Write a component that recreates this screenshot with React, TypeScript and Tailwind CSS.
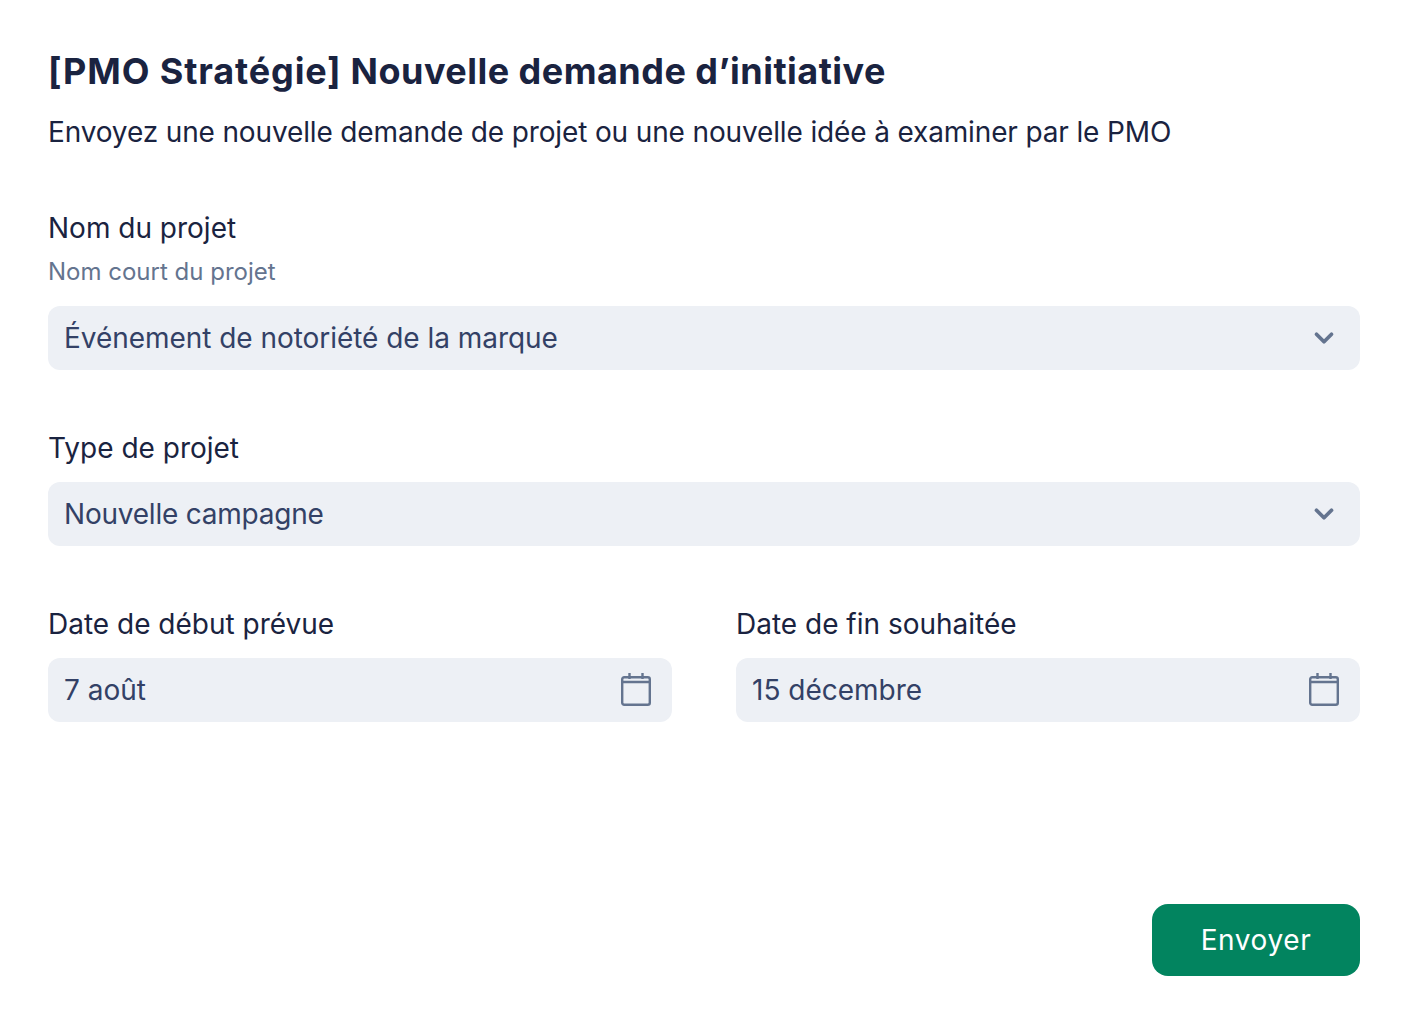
import { ChevronDown } from 'lucide-react';

function CalendarIcon() {
  return (
    <svg width="32" height="34" viewBox="0 0 32 34" fill="none" stroke="#64748f" strokeWidth="2.4">
      <rect x="2.2" y="4.2" width="27.6" height="27.6" rx="2" />
      <path d="M2 9h28M9.5 0v6M22.5 0v6" />
    </svg>
  );
}

function Select({ value, spacing }: { value: string; spacing: string }) {
  return (
    <div className="flex h-16 items-center justify-between rounded-xl bg-[#edf0f5] pl-4 pr-[21px] text-[28px] text-[#334166]">
      <span className={spacing}>{value}</span>
      <ChevronDown size={30} color="#64748f" strokeWidth={3} />
    </div>
  );
}

function DateField({ label, value }: { label: string; value: string }) {
  return (
    <div className="flex flex-col">
      <label className="mb-3 text-[28px] leading-[44px] text-[#1a2340]">{label}</label>
      <div className="flex h-16 items-center justify-between rounded-xl bg-[#edf0f5] pl-4 pr-5 text-[28px] text-[#334166]">
        <span>{value}</span>
        <CalendarIcon />
      </div>
    </div>
  );
}

export default function App() {
  return (
    <div className="min-h-screen bg-white px-12 pt-12 font-['Inter',sans-serif] text-[#1a2340]">
      <h1 className="text-[36px] font-bold leading-[46px] tracking-[0.47px]">
        <span className="tracking-[0.87px]">[PMO Stratégie]</span> Nouvelle demande d’initiative
      </h1>
      <p className="mt-[18px] text-[28px] leading-10 tracking-[-0.14px]">Envoyez une nouvelle demande de projet ou une nouvelle idée à examiner par le PMO</p>
      <label className="mt-[54px] block text-[28px] leading-[44px]">Nom du projet</label>
      <p className="mt-1.5 mb-[18px] text-2xl leading-8 text-[#64748f]">Nom court du projet</p>
      <Select value="Événement de notoriété de la marque" spacing="tracking-[-0.04px]" />
      <label className="mt-14 mb-3 block text-[28px] leading-[44px]">Type de projet</label>
      <Select value="Nouvelle campagne" spacing="tracking-[-0.22px]" />
      <div className="mt-14 grid grid-cols-2 gap-16">
        <DateField label="Date de début prévue" value="7 août" />
        <DateField label="Date de fin souhaitée" value="15 décembre" />
      </div>
      <div className="mt-[182px] flex justify-end">
        <button className="h-[72px] w-[208px] rounded-2xl bg-[#02845f] text-[28px] tracking-[0.6px] text-white">Envoyer</button>
      </div>
    </div>
  );
}
